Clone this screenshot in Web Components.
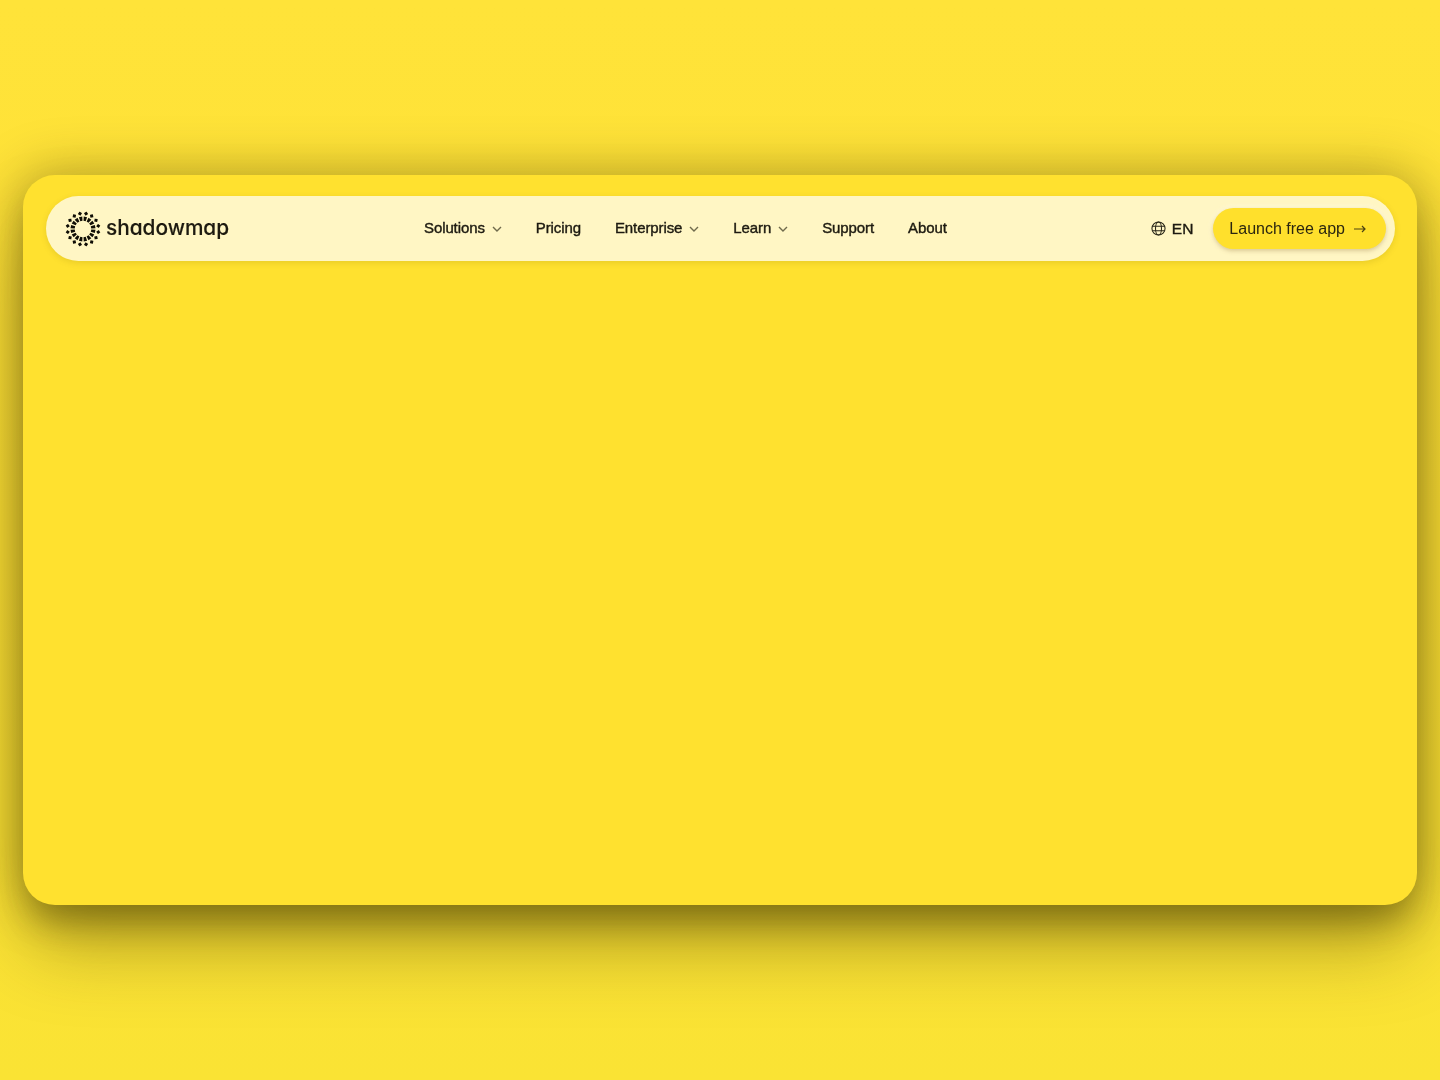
<!DOCTYPE html>
<html>
<head>
<meta charset="utf-8">
<title>shadowmap</title>
<style>
  html, body { margin: 0; height: 1080px; overflow: hidden; }
  body {
    background: linear-gradient(180deg, #ffe339 0%, #fee136 50%, #fae334 100%);
    font-family: "Liberation Sans", Arial, sans-serif;
    color: #1d1a10;
  }
</style>
</head>
<body>
<hero-frame>
  <site-nav>
    <sm-logo slot="brand"></sm-logo>
    <nav-link caret>Solutions</nav-link>
    <nav-link>Pricing</nav-link>
    <nav-link caret>Enterprise</nav-link>
    <nav-link caret>Learn</nav-link>
    <nav-link>Support</nav-link>
    <nav-link>About</nav-link>
    <lang-switch slot="actions">EN</lang-switch>
    <cta-button slot="actions">Launch free app</cta-button>
  </site-nav>
</hero-frame>

<script>
customElements.define('hero-frame',
class extends HTMLElement {
    constructor() {
        super();
        this.attachShadow({mode: 'open'}).innerHTML = `
        <style>
            :host { display: block; padding: 175px 23px 0; }
            .card {
                height: 730px;
                box-sizing: border-box;
                padding: 21px 22px 0 23px;
                background: #ffe12f;
                border-radius: 32px;
                box-shadow:
                    0 24px 30px -8px rgba(60,50,0,.28),
                    0 46px 76px -6px rgba(60,50,0,.36),
                    0 0 50px 4px rgba(60,50,0,.34);
            }
        </style>
        <div class="card"><slot></slot></div>`;
    }
});

customElements.define('site-nav',
class extends HTMLElement {
    constructor() {
        super();
        this.attachShadow({mode: 'open'}).innerHTML = `
        <style>
            :host { display: block; }
            nav {
                height: 65px;
                box-sizing: border-box;
                display: grid;
                grid-template-columns: 359px auto 1fr;
                align-items: center;
                padding: 0 9px 0 19px;
                background: #fff6c4;
                border-radius: 33px;
                box-shadow: 0 2px 6px rgba(120,100,0,.16);
            }
            .links { display: flex; align-items: center; gap: 34px; filter: blur(.35px); position: relative; top: -1px; }
            .brand { filter: blur(.35px); }
            .actions { display: flex; align-items: center; justify-content: flex-end; gap: 20px; filter: blur(.3px); }
        </style>
        <nav>
            <div class="brand"><slot name="brand"></slot></div>
            <div class="links"><slot></slot></div>
            <div class="actions"><slot name="actions"></slot></div>
        </nav>`;
    }
});

customElements.define('sm-logo',
class extends HTMLElement {
    constructor() {
        super();
        // two rings: short bars inside, square dots outside
        var bars = '';
        for (var i = 0; i < 16; i++) {
            var a = i * 22.5 + 11.25;
            bars += `<g transform="rotate(${a} 18 18)">
                <path d="M16.3 5.6h3.4l-.6 4.2h-2.2z"/>
                <rect x="16.5" y=".9" width="3" height="3" rx=".3" transform="rotate(45 18 2.4)"/>
            </g>`;
        }
        this.attachShadow({mode: 'open'}).innerHTML = `
        <style>
            :host { display: flex; align-items: center; gap: 5px; }
            svg { width: 36px; height: 36px; fill: #100e06; flex: none; }
            span {
                font: 500 20.8px Inter, "Noto Sans", sans-serif;
                font-feature-settings: "cv11" 1;
                color: #1d1a10;
                -webkit-text-stroke: .15px #1d1a10;
                position: relative; top: -1px;
            }
        </style>
        <svg viewBox="0 0 36 36">${bars}</svg><span>shadowmap</span>`;
    }
});

customElements.define('nav-link',
class extends HTMLElement {
    constructor() {
        super();
        var caret = this.hasAttribute('caret') ? `
            <svg viewBox="0 0 10 6"><path d="M1 1l4 4 4-4" fill="none" stroke="#6f6a4c" stroke-width="1.4"/></svg>` : '';
        this.attachShadow({mode: 'open'}).innerHTML = `
        <style>
            :host { display: flex; align-items: center; gap: 7px; font-size: 15px; letter-spacing: -.1px; cursor: pointer; -webkit-text-stroke: .4px #1d1a10; }
            svg { width: 10px; height: 6px; margin-top: 2px; }
        </style>
        <slot></slot>${caret}`;
    }
});

customElements.define('lang-switch',
class extends HTMLElement {
    constructor() {
        super();
        this.attachShadow({mode: 'open'}).innerHTML = `
        <style>
            :host { display: flex; align-items: center; gap: 6px; font-size: 15.5px; -webkit-text-stroke: .4px #1d1a10; }
            svg { width: 15px; height: 15px; fill: none; stroke: #2a2718; stroke-width: 1.15; }
        </style>
        <svg viewBox="0 0 16 16">
            <circle cx="8" cy="8" r="7"/>
            <ellipse cx="8" cy="8" rx="3.2" ry="7"/>
            <path d="M1.4 5.6h13.2M1.4 10.4h13.2"/>
        </svg>
        <slot></slot>`;
    }
});

customElements.define('cta-button',
class extends HTMLElement {
    constructor() {
        super();
        this.attachShadow({mode: 'open'}).innerHTML = `
        <style>
            :host {
                display: flex; align-items: center; gap: 9px;
                height: 41px; box-sizing: border-box;
                padding: 0 20px 0 16px;
                font-size: 16px;
                color: #2b2610;
                background: #ffe02c;
                border-radius: 21px;
                box-shadow: 0 2px 4px rgba(150,110,20,.35), 0 0 4px 2px rgba(255,252,230,.55);
                cursor: pointer;
            }
            svg { width: 12px; height: 8px; fill: none; stroke: #4c4312; stroke-width: 1.2; }
        </style>
        <slot></slot>
        <svg viewBox="0 0 12 8"><path d="M0 4h11M8 1l3 3-3 3"/></svg>`;
    }
});
</script>
</body>
</html>
